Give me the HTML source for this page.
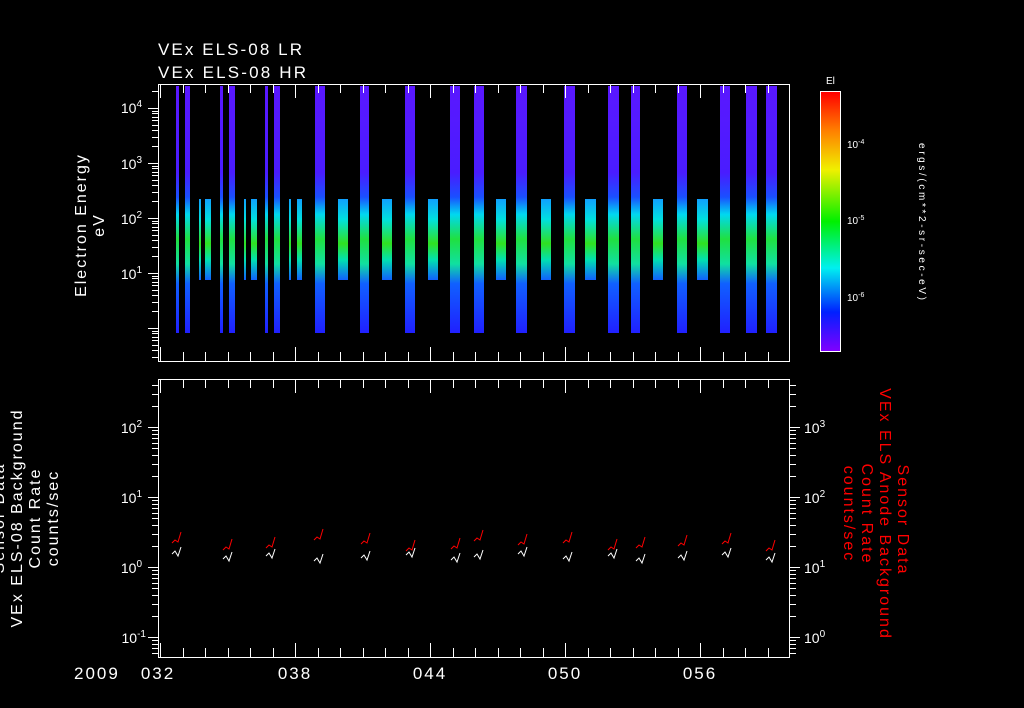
<!DOCTYPE html>
<html><head><meta charset="utf-8"><style>
html,body{margin:0;padding:0;background:#000;width:1024px;height:708px;overflow:hidden}
svg{display:block}
text{font-family:"Liberation Sans",sans-serif;fill:#fff}
.w{letter-spacing:2px}
</style></head><body>
<svg id="s" width="1024" height="708" xmlns="http://www.w3.org/2000/svg">
<defs>
<linearGradient id="tall" x1="0" y1="86" x2="0" y2="333" gradientUnits="userSpaceOnUse">
<stop offset="0" stop-color="#5a18ff"/><stop offset="0.35" stop-color="#4a1cff"/>
<stop offset="0.45" stop-color="#1a50ff"/><stop offset="0.52" stop-color="#00d8f0"/>
<stop offset="0.62" stop-color="#20e040"/><stop offset="0.72" stop-color="#10e0a0"/>
<stop offset="0.8" stop-color="#1060ff"/><stop offset="1" stop-color="#2020ff"/>
</linearGradient>
<linearGradient id="short" x1="0" y1="199" x2="0" y2="280" gradientUnits="userSpaceOnUse">
<stop offset="0" stop-color="#10a0ff"/><stop offset="0.25" stop-color="#00e0e0"/>
<stop offset="0.55" stop-color="#30e020"/><stop offset="0.75" stop-color="#00e0b0"/>
<stop offset="1" stop-color="#1060ff"/>
</linearGradient>
<linearGradient id="cb" x1="0" y1="92" x2="0" y2="351" gradientUnits="userSpaceOnUse">
<stop offset="0" stop-color="#ff0000"/><stop offset="0.15" stop-color="#ff8000"/>
<stop offset="0.3" stop-color="#f0f000"/><stop offset="0.5" stop-color="#00f000"/>
<stop offset="0.68" stop-color="#00f0f0"/><stop offset="0.85" stop-color="#0020ff"/>
<stop offset="1" stop-color="#8000ff"/>
</linearGradient>
</defs>
<text x="158" y="55" font-size="17" class="w" textLength="146">VEx ELS-08 LR</text>
<text x="158" y="78" font-size="17" class="w" textLength="150">VEx ELS-08 HR</text>
<g id="bars"></g>
<g id="ax" stroke="#fff" fill="none" stroke-width="1"></g>
<rect x="820.5" y="91.5" width="20" height="260" fill="url(#cb)" stroke="#fff"/>
<text x="826" y="84" font-size="10">El</text>
<text x="847" y="148" font-size="10">10<tspan dy="-4" font-size="7">-4</tspan></text>
<text x="847" y="224" font-size="10">10<tspan dy="-4" font-size="7">-5</tspan></text>
<text x="847" y="301" font-size="10">10<tspan dy="-4" font-size="7">-6</tspan></text>
<text transform="translate(919,143) rotate(90)" font-size="10" textLength="157">ergs/(cm**2-sr-sec-eV)</text>
<text transform="translate(86,225) rotate(-90)" font-size="16" text-anchor="middle" class="w">Electron Energy</text>
<text transform="translate(104,225) rotate(-90)" font-size="16" text-anchor="middle" class="w">eV</text>
<text transform="translate(22,518) rotate(-90)" font-size="16" text-anchor="middle" class="w">VEx ELS-08 Background</text>
<text transform="translate(40,518) rotate(-90)" font-size="16" text-anchor="middle" class="w">Count Rate</text>
<text transform="translate(58,518) rotate(-90)" font-size="16" text-anchor="middle" class="w">counts/sec</text>
<text transform="translate(4,518) rotate(-90)" font-size="16" text-anchor="middle" class="w">Sensor Data</text>
<g font-size="16" class="w">
<text transform="translate(898,520) rotate(90)" text-anchor="middle" style="fill:#f00">Sensor Data</text>
<text transform="translate(880,514) rotate(90)" text-anchor="middle" style="fill:#f00">VEx ELS Anode Background</text>
<text transform="translate(862,514) rotate(90)" text-anchor="middle" style="fill:#f00">Count Rate</text>
<text transform="translate(844,514) rotate(90)" text-anchor="middle" style="fill:#f00">counts/sec</text>
</g>
<g font-size="17" class="w">
<text x="74" y="679">2009</text>
<text x="158" y="679" text-anchor="middle">032</text>
<text x="295" y="679" text-anchor="middle">038</text>
<text x="430" y="679" text-anchor="middle">044</text>
<text x="565" y="679" text-anchor="middle">050</text>
<text x="700" y="679" text-anchor="middle">056</text>
</g>
<g id="lab" font-size="14"></g>
<g id="tr" fill="none" stroke-width="1"></g>
</svg>
<script>
var NS="http://www.w3.org/2000/svg";
function el(p,t,a){var e=document.createElementNS(NS,t);for(var k in a)e.setAttribute(k,a[k]);document.getElementById(p).appendChild(e);return e;}
var tall=[[176,3],[185,5],[220,3],[229,6],[265,3],[274,6],[315,10],[360,9],[405,10],[450,10],[474,10],[516,11],[564,11],[608,11],[631,9],[677,10],[720,10],[746,11],[766,11]];
tall.forEach(function(b){el("bars","rect",{x:b[0],y:86,width:b[1],height:247,fill:"url(#tall)"});});
var sh=[[199,2],[205,6],[244,2],[251,6],[289,2],[297,5],[338,10],[382,10],[428,10],[496,10],[541,10],[585,11],[653,10],[697,11]];
sh.forEach(function(b){el("bars","rect",{x:b[0],y:199,width:b[1],height:81,fill:"url(#short)"});});
function ln(x1,y1,x2,y2){el("ax","line",{x1:x1,y1:y1,x2:x2,y2:y2});}
function box(t,b){ln(158,t+.5,790,t+.5);ln(158,b+.5,790,b+.5);ln(158.5,t,158.5,b);ln(789.5,t,789.5,b);}
box(84,361);box(379,657);
for(var d=0;d<=28;d++){var x=Math.round(160+d*22.5)+.5;if(x>789)break;var L=(d%6==0)?14:9;
 ln(x,84,x,84+L);ln(x,361,x,361-L);ln(x,379,x,379+L);ln(x,657,x,657-L);}
for(var k=-1;k<6;k++)for(var m=1;m<10;m++){var y=328-(k+Math.log10(m))*55;if(y<84||y>361)continue;y=Math.round(y)+.5;ln(m==1?148:152,y,158,y);}
for(var k=-2;k<4;k++)for(var m=1;m<10;m++){var y=567-(k+Math.log10(m))*70;if(y<379||y>657)continue;y=Math.round(y)+.5;ln(m==1?148:152,y,158,y);ln(790,y,m==1?800:796,y);}
function lab(x,y,e){var t=el("lab","text",{x:x,y:y,"text-anchor":"end"});t.textContent="10";var s=document.createElementNS(NS,"tspan");s.setAttribute("dy","-6");s.setAttribute("font-size","10");s.textContent=e;t.appendChild(s);}
lab(142,113,"4");lab(142,169,"3");lab(142,224,"2");lab(142,279,"1");
lab(142,433,"2");lab(142,503,"1");lab(142,573,"0");lab(146,643,"-1");
[[3,433],[2,503],[1,573],[0,643]].forEach(function(a){var t=el("lab","text",{x:804,y:a[1]});t.textContent="10";var s=document.createElementNS(NS,"tspan");s.setAttribute("dy","-6");s.setAttribute("font-size","10");s.textContent=a[0];t.appendChild(s);});
var xs=[176,227,270,318,365,410,455,478,522,567,612,640,682,726,770];
xs.forEach(function(x,i){var yr=540+((i*7)%9)-(i==7||i==3?6:0),yw=552+((i*5)%8);
 el("tr","polyline",{points:(x-4)+","+(yr+3)+" "+(x-1)+","+(yr)+" "+(x+2)+","+(yr+2)+" "+(x+5)+","+(yr-8),stroke:"#f00"});
 el("tr","polyline",{points:(x-4)+","+(yw+2)+" "+(x-1)+","+(yw-1)+" "+(x+2)+","+(yw+4)+" "+(x+5)+","+(yw-5),stroke:"#fff"});});
</script>
</body></html>
